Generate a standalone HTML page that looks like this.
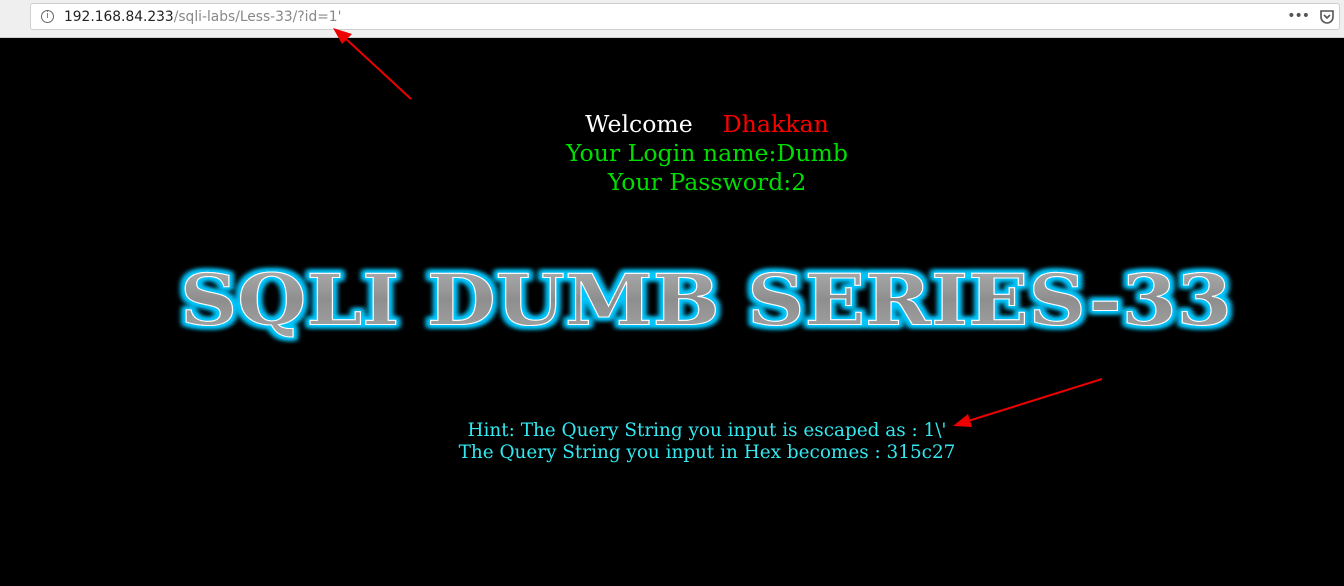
<!DOCTYPE html>
<html><head><style>
html,body{margin:0;padding:0;width:1344px;height:586px;overflow:hidden;background:#000;font-family:"DejaVu Serif","Liberation Serif",serif;}
.bar{position:absolute;left:0;top:0;width:1344px;height:37px;background:#efefef;border-bottom:1px solid #d0d0d0;}
.url{position:absolute;left:30px;top:3px;width:1310px;height:27px;background:#fff;border:1px solid #cfcfcf;border-radius:3px;box-sizing:border-box;}
.url .t{position:absolute;left:33px;top:5px;font:13.8px "DejaVu Sans","Liberation Sans",sans-serif;color:#222;}
.url .t span{color:#888;}
.info{position:absolute;left:10px;top:6px;width:11px;height:11px;border:1px solid #666;border-radius:50%;font:9px "DejaVu Sans",sans-serif;color:#666;text-align:center;line-height:11px;}
.c{position:absolute;left:0;width:1414px;text-align:center;white-space:nowrap;}
</style></head><body>
<div class="bar"><div class="url"><div class="info">i</div><div class="t">192.168.84.233<span>/sqli-labs/Less-33/?id=1'</span></div>
<div style="position:absolute;right:30px;top:4px;font:14px 'DejaVu Sans',sans-serif;color:#555;letter-spacing:-1px">•••</div>
<svg style="position:absolute;right:4px;top:5px" width="16" height="16" viewBox="0 0 16 16"><path d="M2 2h12v6a6 6 0 0 1-12 0z" fill="none" stroke="#555" stroke-width="1.6"/><path d="M5 6l3 3 3-3" fill="none" stroke="#555" stroke-width="1.6"/></svg>
</div></div>
<div class="c" style="top:110px;font-size:23.6px;color:#fff">Welcome&nbsp;&nbsp;&nbsp;&nbsp;<span style="color:#f00">Dhakkan</span></div>
<div class="c" style="top:139px;font-size:23.6px;color:#0d0">Your Login name:Dumb</div>
<div class="c" style="top:168px;font-size:23.6px;color:#0d0">Your Password:2</div>
<svg style="position:absolute;left:0;top:0" width="1344" height="586">
<defs>
<filter id="g" x="-10%" y="-30%" width="120%" height="160%"><feMorphology in="SourceAlpha" operator="dilate" radius="3" result="d"/><feGaussianBlur in="d" stdDeviation="3" result="b"/><feFlood flood-color="#00c8ff"/><feComposite in2="b" operator="in" result="gl"/><feMerge><feMergeNode in="gl"/><feMergeNode in="gl"/><feMergeNode in="SourceGraphic"/></feMerge></filter>
<linearGradient id="m" x1="0" y1="0" x2="0" y2="1"><stop offset="0" stop-color="#b5b5b5"/><stop offset="0.5" stop-color="#8e8e8e"/><stop offset="1" stop-color="#a8a8a8"/></linearGradient>
</defs>
<text x="180" y="324" font-family="DejaVu Serif" font-weight="bold" font-size="86" textLength="1052" lengthAdjust="spacingAndGlyphs" fill="url(#m)" stroke="#fff" stroke-width="1.2" filter="url(#g)" transform="translate(0,59) scale(1,0.82)">SQLI DUMB SERIES-33</text>
<line x1="411" y1="99" x2="345" y2="38" stroke="#e00" stroke-width="2"/><polygon points="333,28 352,34 342,44" fill="#e00"/>
<line x1="1102" y1="379" x2="968" y2="421" stroke="#e00" stroke-width="2"/><polygon points="953,426 968,414 972,427" fill="#e00"/>
</svg>
<div class="c" style="top:420px;font-size:18.4px;color:#33e8f0">Hint: The Query String you input is escaped as : 1\'</div>
<div class="c" style="top:442px;font-size:18.4px;color:#33e8f0">The Query String you input in Hex becomes : 315c27</div>
</body></html>
